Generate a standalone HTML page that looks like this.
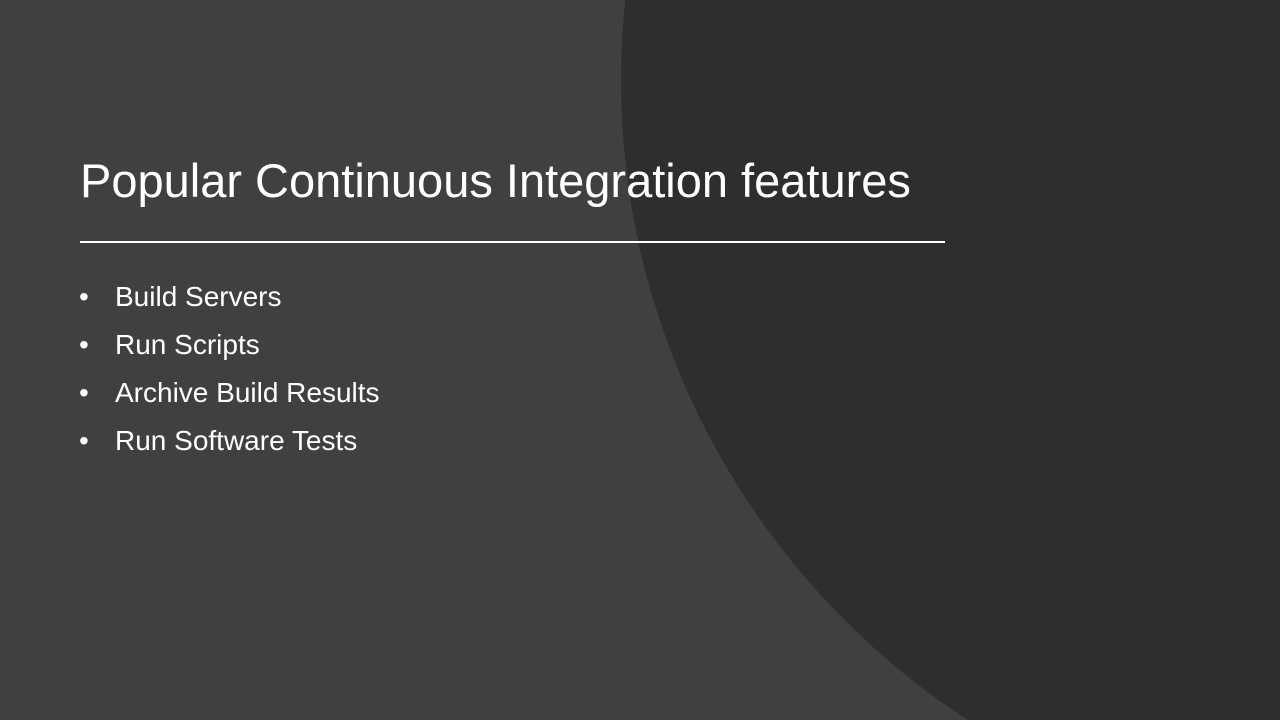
<!DOCTYPE html>
<html><head><meta charset="utf-8"><style>
html,body{margin:0;padding:0;width:1280px;height:720px;overflow:hidden}
body{background:#404040;font-family:"Liberation Sans",sans-serif;color:#fff;position:relative}
svg{position:absolute;left:0;top:0}
.t{position:absolute;left:80px;top:154px;font-size:47px;line-height:54px;white-space:nowrap}
.l{position:absolute;left:80px;top:241px;width:865px;height:2px;background:#fff}
ul{position:absolute;left:80px;top:273px;margin:0;padding:0;list-style:none;font-size:28px}
li{height:48px;line-height:48px;position:relative;padding-left:35px}
li:before{content:"•";position:absolute;left:-1px;top:0;font-size:28px}
</style></head><body>
<svg width="1280" height="720" viewBox="0 0 1280 720"><circle cx="1385" cy="80" r="764" fill="#2e2e2e"/></svg>
<div class="t">Popular Continuous Integration features</div>
<div class="l"></div>
<ul><li>Build Servers</li><li>Run Scripts</li><li>Archive Build Results</li><li>Run Software Tests</li></ul>
</body></html>
